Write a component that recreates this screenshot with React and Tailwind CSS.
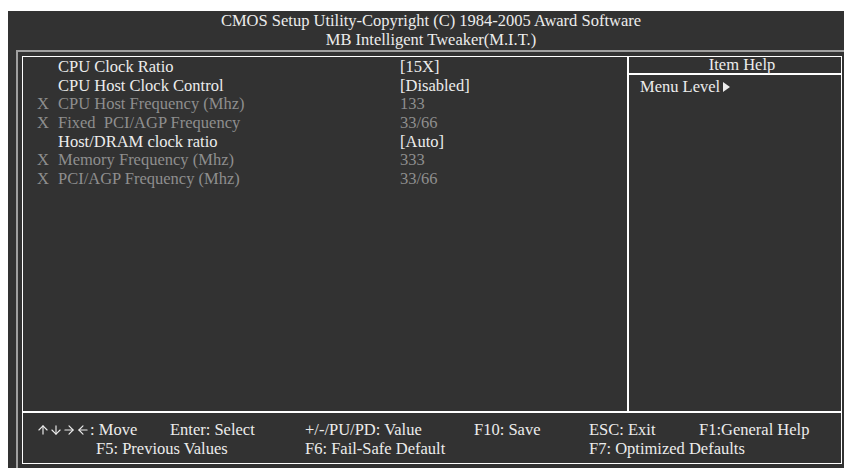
import React from 'react'
import { ArrowUp, ArrowDown, ArrowRight, ArrowLeft } from 'lucide-react'

const rows = [
  { x: false, label: 'CPU Clock Ratio', value: '[15X]' },
  { x: false, label: 'CPU Host Clock Control', value: '[Disabled]' },
  { x: true, label: 'CPU Host Frequency (Mhz)', value: '133' },
  { x: true, label: 'Fixed  PCI/AGP Frequency', value: '33/66' },
  { x: false, label: 'Host/DRAM clock ratio', value: '[Auto]' },
  { x: true, label: 'Memory Frequency (Mhz)', value: '333' },
  { x: true, label: 'PCI/AGP Frequency (Mhz)', value: '33/66' },
]

function Row({ item }) {
  const color = item.x ? 'text-[#8e8e8e]' : 'text-[#ececec]'
  return (
    <div className={'flex h-[18.67px] items-center whitespace-pre ' + color}>
      <span className="w-[21px]">{item.x ? 'X' : ''}</span>
      <span className="w-[342px]">{item.label}</span>
      <span>{item.value}</span>
    </div>
  )
}

export default function App() {
  return (
    <div className="w-[844px] h-[468px] bg-white pl-2 pt-[11px] overflow-hidden" style={{ fontFamily: '"Liberation Serif", "Times New Roman", serif' }}>
      <div className="h-full bg-[#323232] flex flex-col text-[16.5px] text-[#ececec]">
        {/* title */}
        <div className="h-[39px] flex flex-col items-center leading-[19px] pl-[10px]">
          <div>CMOS Setup Utility-Copyright (C) 1984-2005 Award Software</div>
          <div>MB Intelligent Tweaker(M.I.T.)</div>
        </div>

        <div className="flex-1 ml-2 border-t-2 border-l-2 border-[#a0a0a0] pl-1 pt-1 pr-[2px]">
          <div className="h-[408px] border border-white flex flex-col">
            <div className="h-[356px] flex border-b-2 border-white">
              <div className="w-[606px] border-r-2 border-white pl-[14px] pt-[1px]">
                {rows.map((r, i) => <Row key={i} item={r} />)}
              </div>
              <div className="flex-1 flex flex-col">
                <div className="h-[18px] border-b-2 border-white flex items-center justify-center pl-[14px] leading-none">Item Help</div>
                <div className="pl-[11px] pt-[2px] flex items-center gap-[3px] leading-[19px]">
                  Menu Level
                  <svg width="7" height="10" viewBox="0 0 7 10"><path d="M0 0 L7 5 L0 10 Z" fill="#ececec" /></svg>
                </div>
              </div>
            </div>
            <div className="flex-1 pt-[7px] leading-[19px] whitespace-pre">
              <div className="flex pl-[14px]">
                <span className="w-[133px] flex items-center">
                  <ArrowUp size={14} strokeWidth={2} className="-mx-[1px]" />
                  <ArrowDown size={14} strokeWidth={2} className="-mr-[1px]" />
                  <ArrowRight size={14} strokeWidth={2} />
                  <ArrowLeft size={14} strokeWidth={2} />
                  <span>: Move</span>
                </span>
                <span className="w-[135px]">Enter: Select</span>
                <span className="w-[169px]">+/-/PU/PD: Value</span>
                <span className="w-[115px]">F10: Save</span>
                <span className="w-[110px]">ESC: Exit</span>
                <span>F1:General Help</span>
              </div>
              <div className="flex pl-[73px]">
                <span className="w-[209px]">F5: Previous Values</span>
                <span className="w-[284px]">F6: Fail-Safe Default</span>
                <span>F7: Optimized Defaults</span>
              </div>
            </div>
          </div>
        </div>
      </div>
    </div>
  )
}
